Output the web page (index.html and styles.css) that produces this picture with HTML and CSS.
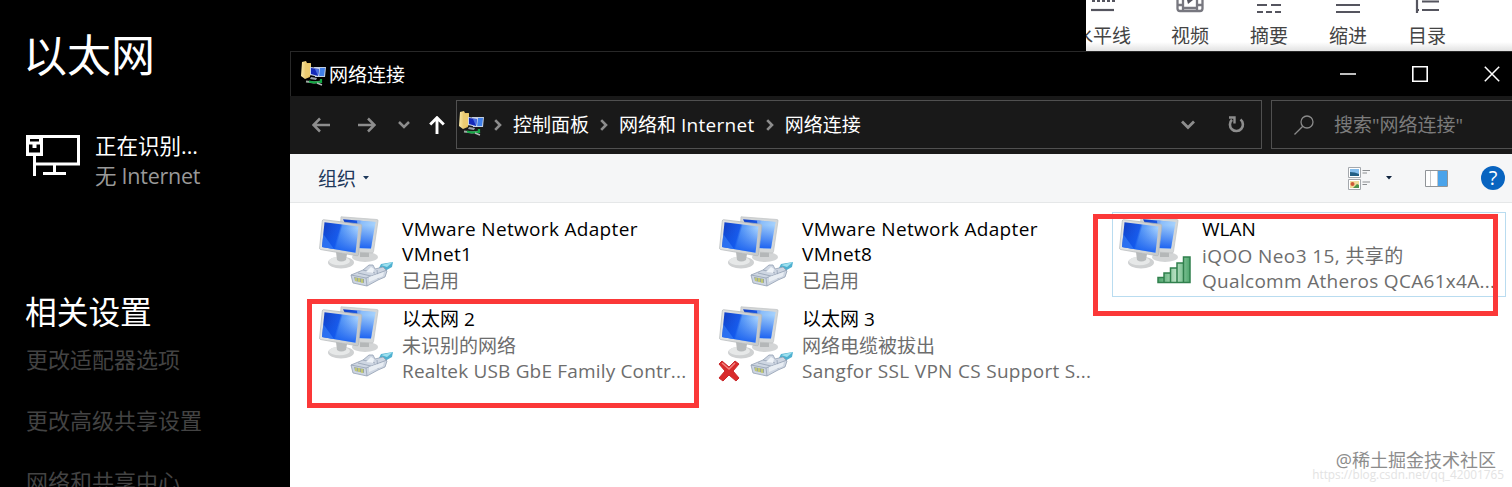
FILE: index.html
```html
<!DOCTYPE html>
<html lang="zh-CN">

<head>
  <meta charset="utf-8">
  <title>网络连接</title>
  <link rel="stylesheet" href="styles.css">
</head>

<body>

  <!-- shared icons -->
  <svg class="defs">
    <defs>
      <linearGradient id="screen" x1="0" y1="0" x2="1" y2="0.25">
        <stop offset="0" stop-color="#123fc4"></stop>
        <stop offset="0.5" stop-color="#1a5bea"></stop>
        <stop offset="0.56" stop-color="#5596f6"></stop>
        <stop offset="1" stop-color="#a9d4ff"></stop>
      </linearGradient>
      <linearGradient id="shade" x1="0" y1="0" x2="0" y2="1">
        <stop offset="0.2" stop-color="#0f58ea" stop-opacity="0"></stop>
        <stop offset="1" stop-color="#0f58f0" stop-opacity="0.9"></stop>
      </linearGradient>
      <linearGradient id="metal" x1="0" y1="0" x2="1" y2="0">
        <stop offset="0" stop-color="#e4e5e5"></stop>
        <stop offset="1" stop-color="#c3c6c7"></stop>
      </linearGradient>
      <linearGradient id="folder" x1="0" y1="0" x2="1" y2="0">
        <stop offset="0" stop-color="#fbe9a4"></stop>
        <stop offset="1" stop-color="#dcae49"></stop>
      </linearGradient>
      <linearGradient id="bars" x1="0" y1="0" x2="1" y2="0">
        <stop offset="0" stop-color="#4da56c"></stop>
        <stop offset="0.55" stop-color="#b5dfc0"></stop>
        <stop offset="1" stop-color="#4da56c"></stop>
      </linearGradient>
      <symbol id="monitors" viewBox="0 0 76 74">
        <ellipse cx="46" cy="41" rx="13" ry="5" fill="#d3d5d6"></ellipse>
        <path d="M41 34l9-1v8H41z" fill="#b4b7b8"></path>
        <path d="M22 .8L58 3.500Q59.300 3.700 59 5L54.500 35.500Q54.300 37 53 37L38 36 20 30z" fill="#d4d7d8" stroke="#bfc2c3" stroke-width=".7"></path>
        <path d="M24 3.200L56.500 6 52 32.500 38 32z" fill="url(#screen)"></path>
        <path d="M38 4.400L56.500 6 52 32.500 41 32z" fill="#a8d3fc" opacity=".65"></path>
        <path d="M24 3.200L56.500 6 52 32.500 38 32z" fill="url(#shade)"></path>
        <ellipse cx="22" cy="46.500" rx="13" ry="6" fill="#cfd1d2"></ellipse>
        <ellipse cx="20.500" cy="45" rx="10.500" ry="4.300" fill="#e6e8e8"></ellipse>
        <path d="M17 36l11 2-1 6q-5 3-9 0z" fill="#b8bbbc"></path>
        <path d="M4.500 3.700L41.500 8.200Q43 8.500 42.800 10L39.500 38.500Q39.200 40 38 39.800L1.500 33.500Q.5 33.200 .6 32L3.300 5Q3.500 3.700 4.500 3.700z" fill="url(#metal)" stroke="#b2b6b8" stroke-width=".7"></path>
        <path d="M5.500 6.300L39.500 10.600 36.500 36.800 3 31z" fill="url(#screen)"></path>
        <path d="M5.500 6.300L39.500 10.600 36.500 36.800 3 31z" fill="url(#shade)"></path>
        <path d="M4.200 18L3 31 15 33z" fill="#4c93ff" opacity=".45"></path>
      </symbol>
      <symbol id="plug" viewBox="0 0 44 28">
        <path d="M29 7L31 3 43 1 42 6 35 10z" fill="#4fb0d0"></path>
        <path d="M31 4L43 1 37 6z" fill="#9ce0ee"></path>
        <path d="M1 14L13 9 19 4 23 4 25 8 33 6 37 10 35 16 28 19 17 25 3 22z" fill="#ced6e2" stroke="#93a0b3" stroke-width=".8"></path>
        <path d="M1 14L16 17 37 9M16 17L17 25M13 9L25 12M8 12l13 3M27 9l1 9" fill="none" stroke="#94a1b4" stroke-width=".8"></path>
        <path d="M16 11L21 6 24 8 23 12z" fill="#eff3f8"></path>
        <path d="M19 16L34 11 33 15 19 21z" fill="#e8edf3"></path>
        <path d="M4 16L14 18 14 22 5 20z" fill="#9aa79a"></path>
        <path d="M6 17v3M9 17v4M12 18v4" stroke="#d5d862" stroke-width="1.300"></path>
      </symbol>
      <symbol id="netfolder" viewBox="0 0 25 25">
        <path d="M1 1L5 0 6 2 9 2V16L4 18 0 15z" fill="url(#folder)"></path>
        <path d="M4 3L10 2V14L5 17z" fill="#eccb70"></path>
        <path d="M13 6L25 6 24 16 14 16z" fill="#c3cfe2"></path>
        <path d="M15 7H24L23 15H16z" fill="#407fe9"></path>
        <path d="M9 6L19 7 18 16 9 14z" fill="#cbd7ec"></path>
        <path d="M10 7L18 8 17 15 10 13z" fill="#1429b8"></path>
        <path d="M14 8L18 8 17 15z" fill="#496fe1"></path>
        <path d="M10 16L16 17 15 19 9 18z" fill="#9aa1a8"></path>
        <path d="M5 20.500L13 21.500 21 20.500" fill="none" stroke="#9eaaa4" stroke-width="2"></path>
        <path d="M8 20.500L13 21.500 20 21V18" fill="none" stroke="#13a944" stroke-width="2.200"></path>
        <path d="M16 22L21 24" stroke="#b4bdbb" stroke-width="1.500"></path>
      </symbol>
      <symbol id="crumb" viewBox="0 0 8 12">
        <path d="M1.200 1.200L6 6 1.200 10.800" fill="none" stroke="#8d8d8d" stroke-width="2.600"></path>
      </symbol>
    </defs>
  </svg>

  <aside class="settings">
    <h1>以太网</h1>
    <div class="status">
      <svg class="status-icon" width="54" height="42" viewBox="0 0 54 42">
        <path d="M16 1.500H52.500V29H10M28.500 30V38M40 38.500H17M8.500 20V41" fill="none" stroke="#fff" stroke-width="3"></path>
        <path d="M0 0H17V21H0zM4 4V6.500H13V4zM3 9.500V17.500H14V9.500H10.500V13H6.500V9.500z" fill="#fff" fill-rule="evenodd"></path>
      </svg>
      <div>
        <div class="status-name">正在识别...</div>
        <div class="status-detail">无 Internet</div>
      </div>
    </div>
    <h2>相关设置</h2>
    <ul>
      <li>更改适配器选项</li>
      <li>更改高级共享设置</li>
      <li>网络和共享中心</li>
    </ul>
  </aside>

  <div class="editor">
    <div class="tool">
      <svg width="26" height="14" viewBox="0 0 26 14"><path d="M2 1h23" stroke="#55555f" stroke-width="2" stroke-dasharray="3 2"></path><path d="M1 10h23" stroke="#55555f" stroke-width="2.200"></path></svg>
      <span>水平线</span>
    </div>
    <div class="tool">
      <svg width="28" height="14" viewBox="0 0 28 14"><path d="M1.500 0V8.500Q1.500 11 4 11H24Q26.500 11 26.500 8.500V0M7 0V11M21 0V11M1 5H7M21 5H27M7 8H21" fill="none" stroke="#77777f" stroke-width="2.300"></path><path d="M11 0H17L12 4z" fill="#55555f"></path></svg>
      <span>视频</span>
    </div>
    <div class="tool">
      <svg width="26" height="14" viewBox="0 0 26 14"><path d="M1 5h10M15 5h10M1 12h6M10 12h6M19 12h6" stroke="#55555f" stroke-width="2.200"></path></svg>
      <span>摘要</span>
    </div>
    <div class="tool">
      <svg width="26" height="14" viewBox="0 0 26 14"><path d="M1 5h24M1 12h24" stroke="#55555f" stroke-width="2.200"></path></svg>
      <span>缩进</span>
    </div>
    <div class="tool">
      <svg width="26" height="14" viewBox="0 0 26 14"><path d="M3 0V13M3 10H5M8 1.500H25M8 10H25" fill="none" stroke="#55555f" stroke-width="2.200"></path></svg>
      <span>目录</span>
    </div>
  </div>

  <main class="explorer">
    <header class="titlebar">
      <svg class="app-icon"><use href="#netfolder"></use></svg>
      <span class="title">网络连接</span>
      <div class="window-buttons">
        <svg width="16" height="16" viewBox="0 0 16 16"><path d="M0 8h16" stroke="#fff" stroke-width="1.500"></path></svg>
        <svg width="16" height="16" viewBox="0 0 16 16"><path d="M.8 .8H15.200V15.200H.8z" fill="none" stroke="#fff" stroke-width="1.600"></path></svg>
        <svg width="16" height="16" viewBox="0 0 16 16"><path d="M.8 .8L15.200 15.200M15.200 .8L.8 15.200" stroke="#fff" stroke-width="1.500"></path></svg>
      </div>
    </header>

    <nav class="navbar">
      <div class="arrows">
        <svg width="18" height="16" viewBox="0 0 18 16"><path d="M18 8H2M8 1.500L1.500 8 8 14.500" fill="none" stroke="#8d8d8d" stroke-width="2.500"></path></svg>
        <svg width="18" height="16" viewBox="0 0 18 16"><path d="M0 8H16M10 1.500L16.500 8 10 14.500" fill="none" stroke="#8d8d8d" stroke-width="2.500"></path></svg>
        <svg width="12" height="8" viewBox="0 0 12 8"><path d="M1 1L6 6 11 1" fill="none" stroke="#8d8d8d" stroke-width="2.500"></path></svg>
        <svg width="16" height="18" viewBox="0 0 16 18"><path d="M8 18V2M1.200 8.500L8 1.700 14.800 8.500" fill="none" stroke="#fff" stroke-width="2.900"></path></svg>
      </div>
      <div class="address">
        <svg class="app-icon"><use href="#netfolder"></use></svg>
        <svg class="crumb"><use href="#crumb"></use></svg>
        <span>控制面板</span>
        <svg class="crumb"><use href="#crumb"></use></svg>
        <span>网络和 <i>Internet</i></span>
        <svg class="crumb"><use href="#crumb"></use></svg>
        <span>网络连接</span>
        <div class="address-tools">
          <svg width="14" height="10" viewBox="0 0 14 10"><path d="M1 1.500L7 7.500 13 1.500" fill="none" stroke="#8d8d8d" stroke-width="2.800"></path></svg>
          <svg width="17" height="18" viewBox="0 0 17 18"><path d="M12.500 3.500A6.500 6.500 0 1 1 4 3.800" fill="none" stroke="#8d8d8d" stroke-width="2.600"></path><path d="M1 1.500H6.500V7.500" fill="none" stroke="#8d8d8d" stroke-width="2.400"></path></svg>
        </div>
      </div>
      <div class="search">
        <svg width="20" height="20" viewBox="0 0 20 20"><circle cx="13" cy="7" r="6" fill="none" stroke="#8a8a8a" stroke-width="1.300"></circle><path d="M8.800 11.200L.5 19.500" stroke="#8a8a8a" stroke-width="1.300"></path></svg>
        <span>搜索"网络连接"</span>
      </div>
    </nav>

    <div class="commands">
      <span class="organize">组织</span>
      <svg class="caret" width="6" height="4" viewBox="0 0 6 4"><path d="M0 0H6L3 3.500z" fill="#1e395b"></path></svg>
      <div class="views">
        <svg width="23" height="23" viewBox="0 0 23 23">
          <path d="M.5 .5H12.500V10.500H.5zM.5 12.500H12.500V22.500H.5z" fill="#fff" stroke="#a4a8ad"></path>
          <path d="M2 2H11V9H2z" fill="#85bdec"></path><path d="M2 5Q7 5 11 7V9H2z" fill="#225d83"></path>
          <path d="M2 14H11V21H2z" fill="#f0dd9b"></path><circle cx="4.500" cy="17" r="2" fill="#cf5938"></circle><path d="M5 21L9 17 11 18V21z" fill="#4d944b"></path>
          <path d="M14.500 3.500H22M14.500 6H19M14.500 15H22M14.500 17.500H19" stroke="#8b8e91"></path>
        </svg>
        <svg width="6" height="4" viewBox="0 0 6 4"><path d="M0 0H6L3 3.500z" fill="#10243f"></path></svg>
        <svg width="23" height="17" viewBox="0 0 23 17">
          <path d="M.5 .5H22.500V16.500H.5z" fill="#fff" stroke="#909498"></path>
          <path d="M5.500 1V16M12.500 1V16" stroke="#c3c6c9"></path>
          <path d="M13 1H22V16H13z" fill="#4aa3ea"></path>
        </svg>
        <b class="help">?</b>
      </div>
    </div>

    <section class="connections">
      <article class="connection">
        <div class="device">
          <svg class="monitors"><use href="#monitors"></use></svg>
          <svg class="plug"><use href="#plug"></use></svg>
        </div>
        <div class="info">
          <div class="name vmware">VMware Network Adapter<br>VMnet1</div>
          <div class="detail">已启用</div>
        </div>
      </article>
      <article class="connection">
        <div class="device">
          <svg class="monitors"><use href="#monitors"></use></svg>
          <svg class="plug"><use href="#plug"></use></svg>
        </div>
        <div class="info">
          <div class="name vmware">VMware Network Adapter<br>VMnet8</div>
          <div class="detail">已启用</div>
        </div>
      </article>
      <article class="connection focused">
        <div class="device">
          <svg class="monitors"><use href="#monitors"></use></svg>
          <svg class="signal" width="34" height="28" viewBox="0 0 34 28">
            <path d="M1 21.500H7V26.500H1zM7 17H13.500V26.500H7zM13.500 12H20V26.500H13.500zM20 7H26.500V26.500H20zM26.500 1H33V26.500H26.500z" fill="url(#bars)" stroke="#30804d" stroke-width="1.500"></path>
          </svg>
        </div>
        <div class="info">
          <div class="name">WLAN</div>
          <div class="detail ssid">iQOO Neo3 15, 共享的</div>
          <div class="detail adapter">Qualcomm Atheros QCA61x4A...</div>
        </div>
      </article>
      <article class="connection">
        <div class="device">
          <svg class="monitors"><use href="#monitors"></use></svg>
          <svg class="plug"><use href="#plug"></use></svg>
        </div>
        <div class="info">
          <div class="name">以太网 2</div>
          <div class="detail">未识别的网络</div>
          <div class="detail adapter realtek">Realtek USB GbE Family Contr...</div>
        </div>
      </article>
      <article class="connection">
        <div class="device">
          <svg class="monitors"><use href="#monitors"></use></svg>
          <svg class="plug"><use href="#plug"></use></svg>
          <svg class="cross" width="22" height="22" viewBox="0 0 22 22">
            <path d="M1 4L4 1 11 7 17 1 21 4 15 11 21 18 18 21 11 15 5 21 1 18 7 11z" fill="#d92b2b" stroke="#c9282b" stroke-linejoin="round"></path>
            <path d="M4 3L11 9 17 3" fill="none" stroke="#f08583" stroke-width="1.500"></path>
          </svg>
        </div>
        <div class="info">
          <div class="name">以太网 3</div>
          <div class="detail">网络电缆被拔出</div>
          <div class="detail adapter">Sangfor SSL VPN CS Support S...</div>
        </div>
      </article>
    </section>
  </main>

  <div class="mark mark-ethernet"></div>
  <div class="mark mark-wlan"></div>

  <div class="source">https://blog.csdn.net/qq_42001765</div>
  <div class="watermark">@稀土掘金技术社区</div>

</body>

</html>
```
FILE: styles.css
```css
* {
  box-sizing: border-box;
}

body {
  margin: 0;
  width: 1512px;
  height: 487px;
  overflow: hidden;
  position: relative;
  background-color: #000;
  font-family: "Open Sans", "Noto Sans CJK SC", sans-serif;
  font-size: 19px;
}

svg {
  display: block;
  flex-shrink: 0;
}

svg.defs {
  position: absolute;
  width: 0;
  height: 0;
}

/* settings */

.settings {
  width: 290px;
  height: 487px;
  overflow: hidden;
  padding: 23px 0 0 25px;
  color: #fff;
  white-space: nowrap;
}

.settings h1 {
  margin: 0 0 0 -2px;
  font-size: 44px;
  font-weight: 400;
  line-height: 64px;
}

.status {
  display: flex;
  column-gap: 15px;
  margin: 44px 0 0 1px;
  font-size: 21.5px;
  line-height: 30px;
}

.status-icon {
  margin-top: 4px;
}

.status-detail {
  color: #999;
  letter-spacing: -.25px;
}

.settings h2 {
  margin: 97px 0 0;
  font-size: 31.7px;
  font-weight: 400;
  line-height: 48px;
}

.settings ul {
  list-style: none;
  margin: 8px 0 0;
  padding: 0 0 0 1px;
  color: #434343;
  font-size: 22px;
}

.settings li {
  line-height: 30px;
  margin-bottom: 31px;
}

/* editor toolbar */

.editor {
  position: absolute;
  left: 1086px;
  top: 0;
  width: 426px;
  height: 51px;
  overflow: hidden;
  display: flex;
  column-gap: 19px;
  background: linear-gradient(#fff 42px, #e2e2e2);
  color: #444;
}

.tool {
  width: 60px;
  flex-shrink: 0;
  display: flex;
  flex-direction: column;
  align-items: center;
  white-space: nowrap;
}

.tool:first-child {
  width: 57px;
  margin-left: -12px;
  margin-right: 10px;
}

.tool:first-child svg {
  margin-left: 1px;
}

.tool span {
  line-height: 28px;
  margin-top: 8px;
}

/* explorer */

.explorer {
  position: absolute;
  left: 290px;
  top: 51px;
  width: 1222px;
  height: 436px;
  background-color: #fff;
}

.titlebar {
  display: flex;
  align-items: center;
  height: 45px;
  padding: 0 12px 1px 10px;
  background-color: #000;
  border-top: 1px solid #282828;
  border-left: 1px solid #282828;
  color: #fff;
}

.app-icon {
  width: 25px;
  height: 25px;
}

.title {
  margin-left: 3px;
}

.window-buttons {
  display: flex;
  column-gap: 56px;
  margin-left: auto;
}

.navbar {
  display: flex;
  align-items: center;
  height: 58px;
  padding-bottom: 1px;
  background-color: #191919;
  color: #fff;
}

.navbar span {
  margin-top: -2px;
}

.arrows {
  display: flex;
  align-items: center;
  width: 166px;
  padding-left: 22px;
}

.arrows svg:nth-child(2) {
  margin-left: 28px;
}

.arrows svg:nth-child(3) {
  margin-left: 22px;
}

.arrows svg:nth-child(4) {
  margin-left: 19px;
}

.address {
  display: flex;
  align-items: center;
  width: 806px;
  height: 49px;
  padding: 0 16px 0 2px;
  border: 1px solid #505050;
}

.address .app-icon {
  margin-top: -2px;
}

.address i {
  font-style: normal;
  letter-spacing: .3px;
}

.crumb {
  width: 8px;
  height: 12px;
  margin: 0 11px;
}

.address .app-icon + .crumb {
  margin-left: 10px;
}

.address-tools {
  display: flex;
  align-items: center;
  column-gap: 33px;
  margin-left: auto;
}

.search {
  display: flex;
  align-items: center;
  column-gap: 20px;
  flex-grow: 1;
  height: 49px;
  margin-left: 9px;
  padding-left: 22px;
  border: 1px solid #505050;
  border-right: 0 none;
  color: #7b7b7b;
}

.commands {
  display: flex;
  align-items: center;
  height: 49px;
  padding: 0 7px 0 28px;
  background-color: #f5f6f7;
  border-bottom: 1px solid #e5e7e8;
  color: #1e395b;
}

.caret {
  margin-left: 7px;
}

.views {
  display: flex;
  align-items: center;
  margin-left: auto;
}

.views svg:nth-child(2) {
  margin: 0 33px 0 15px;
}

.help {
  width: 24px;
  height: 24px;
  margin-left: 33px;
  border-radius: 50%;
  background-color: #0864c0;
  color: #fff;
  font-size: 20px;
  font-weight: 400;
  line-height: 24px;
  text-align: center;
}

.connections {
  display: grid;
  grid-template-columns: repeat(3, 394px);
  grid-auto-rows: 85px;
  gap: 5px 6px;
  padding: 9px 0 0 22px;
}

.connection {
  display: flex;
  padding: 3px 0 0 6px;
  border: 1px solid transparent;
  white-space: nowrap;
}

.connection.focused {
  border-color: #b9dcf0;
}

.device {
  position: relative;
  width: 83px;
  flex-shrink: 0;
}

.monitors {
  width: 76px;
  height: 74px;
}

.plug {
  position: absolute;
  left: 31px;
  top: 45px;
  width: 44px;
  height: 28px;
}

.signal {
  position: absolute;
  left: 38px;
  top: 40px;
}

.cross {
  position: absolute;
  left: -1px;
  top: 54px;
}

.info {
  padding-top: 1px;
}

.name {
  color: #000;
  line-height: 25px;
}

.name.vmware {
  letter-spacing: .32px;
}

.detail {
  color: #6d6d6d;
  line-height: 26px;
}

.name + .detail {
  padding-top: 1px;
  margin-bottom: -1px;
}

.detail.ssid {
  letter-spacing: .4px;
}

.detail.adapter {
  letter-spacing: .3px;
}

.detail.realtek {
  letter-spacing: .17px;
}

/* red boxes over the list */

.mark {
  position: absolute;
  border: 5px solid #fb3838;
}

.mark-ethernet {
  left: 307px;
  top: 299px;
  width: 392px;
  height: 109px;
}

.mark-wlan {
  left: 1093px;
  top: 214px;
  width: 405px;
  height: 102px;
}

.source {
  position: absolute;
  right: 8px;
  bottom: 5px;
  color: #e3e3e3;
  font-size: 11.8px;
  line-height: 16px;
}

.watermark {
  position: absolute;
  right: 16px;
  bottom: 14px;
  color: #8c8c8c;
  font-size: 18px;
  line-height: 26px;
}
```
